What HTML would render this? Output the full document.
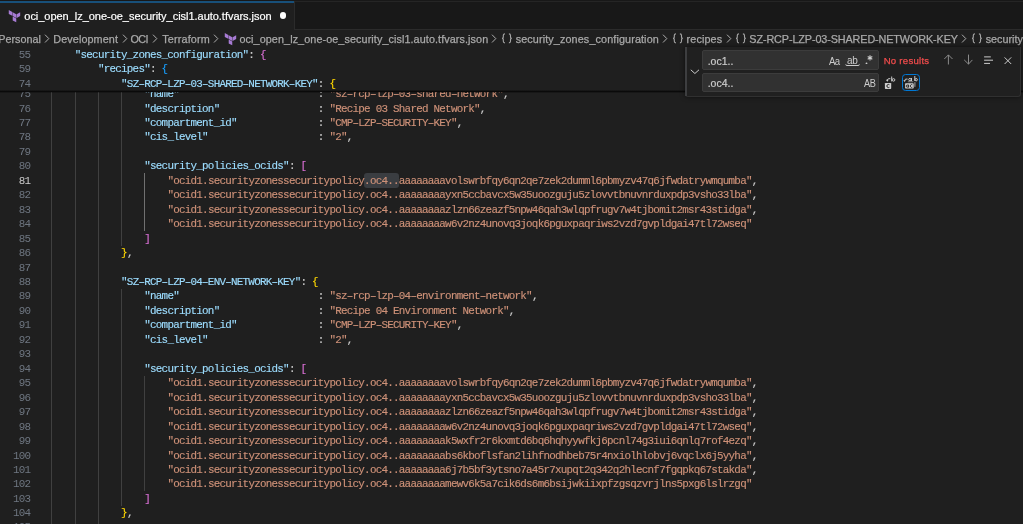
<!DOCTYPE html>
<html><head><meta charset="utf-8">
<style>
html,body{margin:0;padding:0;}
body{width:1023px;height:524px;overflow:hidden;background:#1f1f1f;position:relative;font-family:"Liberation Sans",sans-serif;}
.abs{position:absolute;}
#tabbar{position:absolute;left:0;top:0;width:1023px;height:30px;background:#181818;}
#tabbar .bb{position:absolute;left:294px;top:29px;width:729px;height:1px;background:#2b2b2b;}
#tab{position:absolute;left:0;top:1px;width:294px;height:29px;background:#1f1f1f;border-right:1px solid #2b2b2b;}
#tab .top{position:absolute;left:0;top:0;width:294px;height:2px;background:#18507a;}
#tab .t{position:absolute;left:24.3px;top:8px;font-size:11px;letter-spacing:-0.03px;color:#ffffff;-webkit-text-stroke:0.2px #ffffff;white-space:nowrap;line-height:14px;}
#tab .dot{position:absolute;left:279.6px;top:11.3px;width:6.8px;height:6.8px;border-radius:50%;background:#ffffff;}
#bc{position:absolute;left:0;top:0;}
.bct{position:absolute;top:31px;font-size:10.8px;color:#a9a9a9;white-space:nowrap;line-height:14px;-webkit-text-stroke:0.25px #a9a9a9;}
.code{font-family:"Liberation Mono",monospace;font-size:9.65px;}
.g{position:absolute;width:1px;height:14.46px;}
.hl{position:absolute;height:14.46px;background:#3a3d41;border-radius:3px;}
.ln{position:absolute;left:0;width:30.3px;text-align:right;font-family:"Liberation Mono",monospace;font-size:10.9px;letter-spacing:-0.75px;line-height:14.46px;color:#6e7681;white-space:pre;}
.ln.act{color:#cccccc;}
.cl{position:absolute;font-family:"Liberation Mono",monospace;font-size:10.9px;letter-spacing:-0.75px;line-height:14.46px;white-space:pre;color:#cccccc;-webkit-text-stroke:0.15px currentColor;}
#sticky{position:absolute;left:0;top:46px;width:1023px;height:46px;background:#1f1f1f;}
#stickyshadow{position:absolute;left:0;top:89.5px;width:1023px;height:3.5px;background:linear-gradient(rgba(0,0,0,0) 0%,rgba(0,0,0,0.75) 45%,rgba(0,0,0,0) 100%);}
#find{position:absolute;left:685px;top:47px;width:335.6px;height:49.8px;box-sizing:border-box;will-change:transform;background:#202020;border:1px solid #303030;border-top:none;border-left:none;box-shadow:0 0 5px rgba(0,0,0,0.55);border-bottom-left-radius:3px;border-bottom-right-radius:3px;}
#find .sash{position:absolute;left:0;top:0;width:2.2px;height:100%;background:#3d3e40;}
.inp{position:absolute;left:17px;width:177px;height:19.7px;background:#313131;border:1px solid #3c3c3c;border-radius:2px;box-sizing:border-box;}
.inp .v{position:absolute;left:4.7px;top:3.5px;font-size:10.5px;color:#cccccc;line-height:12px;-webkit-text-stroke:0.2px #cccccc;}
.ft{position:absolute;color:#cccccc;white-space:nowrap;line-height:12px;}
</style></head><body>
<div id="root" style="position:absolute;left:0;top:0;width:1023px;height:524px;overflow:hidden;will-change:transform">
<div id="tabbar">
  <div class="bb"></div>
  <div class="abs" style="left:0;top:1px;width:1023px;height:1px;background:#252525"></div>
  <div id="tab">
    <div class="top"></div>
    <svg class="abs" style="left:7.6px;top:9.3px" width="13" height="13" viewBox="0 0 13 13"><path transform="scale(0.54 0.515)" d="M1.44 0v7.575l6.561 3.79V3.787zm21.12 4.227l-6.561 3.791v7.574l6.56-3.787zM8.72 4.23v7.575l6.561 3.787V8.018zm0 8.405v7.575L15.28 24v-7.578z" fill="#a77bd4"/></svg>
    <div class="t">oci_open_lz_one-oe_security_cisl1.auto.tfvars.json</div>
    <div class="dot"></div>
  </div>
</div>
<div id="bc">
<div class="bct" style="left:-1.7px;top:32.0px;letter-spacing:0.000px">Personal</div>
<svg class="abs" style="left:44.0px;top:34px" width="6" height="10" viewBox="0 0 6 10"><path d="M1 0.7 L4.8 4.6 L1 8.5" fill="none" stroke="#b4b4b4" stroke-width="0.95"/></svg>
<div class="bct" style="left:53.3px;top:32.0px;letter-spacing:0.100px">Development</div>
<svg class="abs" style="left:121.6px;top:34px" width="6" height="10" viewBox="0 0 6 10"><path d="M1 0.7 L4.8 4.6 L1 8.5" fill="none" stroke="#b4b4b4" stroke-width="0.95"/></svg>
<div class="bct" style="left:130.4px;top:32.0px;letter-spacing:-0.600px">OCI</div>
<svg class="abs" style="left:152.4px;top:34px" width="6" height="10" viewBox="0 0 6 10"><path d="M1 0.7 L4.8 4.6 L1 8.5" fill="none" stroke="#b4b4b4" stroke-width="0.95"/></svg>
<div class="bct" style="left:162.3px;top:32.0px;letter-spacing:0.150px">Terraform</div>
<svg class="abs" style="left:213.3px;top:34px" width="6" height="10" viewBox="0 0 6 10"><path d="M1 0.7 L4.8 4.6 L1 8.5" fill="none" stroke="#b4b4b4" stroke-width="0.95"/></svg>
<svg class="abs tfi" style="left:224.0px;top:32.5px" width="13" height="13" viewBox="0 0 13 13"><path transform="scale(0.54 0.515)" d="M1.44 0v7.575l6.561 3.79V3.787zm21.12 4.227l-6.561 3.791v7.574l6.56-3.787zM8.72 4.23v7.575l6.561 3.787V8.018zm0 8.405v7.575L15.28 24v-7.578z" fill="#a77bd4"/></svg>
<div class="bct" style="left:239.5px;top:32.0px;letter-spacing:0.090px">oci_open_lz_one-oe_security_cisl1.auto.tfvars.json</div>
<svg class="abs" style="left:491.2px;top:34px" width="6" height="10" viewBox="0 0 6 10"><path d="M1 0.7 L4.8 4.6 L1 8.5" fill="none" stroke="#b4b4b4" stroke-width="0.95"/></svg>
<svg class="abs" style="left:501.0px;top:33.3px" width="12" height="11" viewBox="0 0 12 11"><path d="M3.9 0.9C2.8 0.9 2.3 1.5 2.3 2.5L2.3 4.3C2.3 5 1.9 5.3 1.1 5.4C1.9 5.5 2.3 5.8 2.3 6.5L2.3 8.3C2.3 9.3 2.8 9.9 3.9 9.9M7.9 0.9C9 0.9 9.5 1.5 9.5 2.5L9.5 4.3C9.5 5 9.9 5.3 10.7 5.4C9.9 5.5 9.5 5.8 9.5 6.5L9.5 8.3C9.5 9.3 9 9.9 7.9 9.9" fill="none" stroke="#a6a6a6" stroke-width="1.1"/></svg>
<div class="bct" style="left:515.7px;top:32.0px;letter-spacing:0.120px">security_zones_configuration</div>
<svg class="abs" style="left:662.4px;top:34px" width="6" height="10" viewBox="0 0 6 10"><path d="M1 0.7 L4.8 4.6 L1 8.5" fill="none" stroke="#b4b4b4" stroke-width="0.95"/></svg>
<svg class="abs" style="left:672.0px;top:33.3px" width="12" height="11" viewBox="0 0 12 11"><path d="M3.9 0.9C2.8 0.9 2.3 1.5 2.3 2.5L2.3 4.3C2.3 5 1.9 5.3 1.1 5.4C1.9 5.5 2.3 5.8 2.3 6.5L2.3 8.3C2.3 9.3 2.8 9.9 3.9 9.9M7.9 0.9C9 0.9 9.5 1.5 9.5 2.5L9.5 4.3C9.5 5 9.9 5.3 10.7 5.4C9.9 5.5 9.5 5.8 9.5 6.5L9.5 8.3C9.5 9.3 9 9.9 7.9 9.9" fill="none" stroke="#a6a6a6" stroke-width="1.1"/></svg>
<div class="bct" style="left:686.6px;top:32.0px;letter-spacing:0.120px">recipes</div>
<svg class="abs" style="left:725.7px;top:34px" width="6" height="10" viewBox="0 0 6 10"><path d="M1 0.7 L4.8 4.6 L1 8.5" fill="none" stroke="#b4b4b4" stroke-width="0.95"/></svg>
<svg class="abs" style="left:735.4px;top:33.3px" width="12" height="11" viewBox="0 0 12 11"><path d="M3.9 0.9C2.8 0.9 2.3 1.5 2.3 2.5L2.3 4.3C2.3 5 1.9 5.3 1.1 5.4C1.9 5.5 2.3 5.8 2.3 6.5L2.3 8.3C2.3 9.3 2.8 9.9 3.9 9.9M7.9 0.9C9 0.9 9.5 1.5 9.5 2.5L9.5 4.3C9.5 5 9.9 5.3 10.7 5.4C9.9 5.5 9.5 5.8 9.5 6.5L9.5 8.3C9.5 9.3 9 9.9 7.9 9.9" fill="none" stroke="#a6a6a6" stroke-width="1.1"/></svg>
<div class="bct" style="left:749.3px;top:32.0px;letter-spacing:-0.100px">SZ-RCP-LZP-03-SHARED-NETWORK-KEY</div>
<svg class="abs" style="left:960.6px;top:34px" width="6" height="10" viewBox="0 0 6 10"><path d="M1 0.7 L4.8 4.6 L1 8.5" fill="none" stroke="#b4b4b4" stroke-width="0.95"/></svg>
<svg class="abs" style="left:971.2px;top:33.3px" width="12" height="11" viewBox="0 0 12 11"><path d="M3.9 0.9C2.8 0.9 2.3 1.5 2.3 2.5L2.3 4.3C2.3 5 1.9 5.3 1.1 5.4C1.9 5.5 2.3 5.8 2.3 6.5L2.3 8.3C2.3 9.3 2.8 9.9 3.9 9.9M7.9 0.9C9 0.9 9.5 1.5 9.5 2.5L9.5 4.3C9.5 5 9.9 5.3 10.7 5.4C9.9 5.5 9.5 5.8 9.5 6.5L9.5 8.3C9.5 9.3 9 9.9 7.9 9.9" fill="none" stroke="#a6a6a6" stroke-width="1.1"/></svg>
<div class="bct" style="left:985.7px;top:32.0px;letter-spacing:0.000px">security</div>
</div>
<div class="g" style="left:51px;top:86.54px;height:448.26px;background:#404040"></div>
<div class="g" style="left:75px;top:86.54px;height:448.26px;background:#404040"></div>
<div class="g" style="left:98px;top:86.54px;height:448.26px;background:#404040"></div>
<div class="g" style="left:121px;top:86.54px;height:159.06px;background:#404040"></div>
<div class="g" style="left:121px;top:288.98px;height:216.90px;background:#404040"></div>
<div class="g" style="left:144px;top:173.30px;height:57.84px;background:#707070"></div>
<div class="g" style="left:144px;top:375.74px;height:115.68px;background:#404040"></div>
<div class="hl" style="left:364.26px;top:173.30px;width:34.74px"></div>
<div class="ln" style="top:87.04px">75</div>
<div class="cl" style="top:87.04px;left:144.24px"><span style="color:#9cdcfe">&quot;name&quot;</span>                        <span style="color:#cccccc">: </span><span style="color:#ce9178">&quot;sz&#8211;rcp&#8211;lzp&#8211;03&#8211;shared&#8211;network&quot;</span><span style="color:#cccccc">,</span></div>
<div class="ln" style="top:101.50px">76</div>
<div class="cl" style="top:101.50px;left:144.24px"><span style="color:#9cdcfe">&quot;description&quot;</span>                 <span style="color:#cccccc">: </span><span style="color:#ce9178">&quot;Recipe 03 Shared Network&quot;</span><span style="color:#cccccc">,</span></div>
<div class="ln" style="top:115.96px">77</div>
<div class="cl" style="top:115.96px;left:144.24px"><span style="color:#9cdcfe">&quot;compartment_id&quot;</span>              <span style="color:#cccccc">: </span><span style="color:#ce9178">&quot;CMP&#8211;LZP&#8211;SECURITY&#8211;KEY&quot;</span><span style="color:#cccccc">,</span></div>
<div class="ln" style="top:130.42px">78</div>
<div class="cl" style="top:130.42px;left:144.24px"><span style="color:#9cdcfe">&quot;cis_level&quot;</span>                   <span style="color:#cccccc">: </span><span style="color:#ce9178">&quot;2&quot;</span><span style="color:#cccccc">,</span></div>
<div class="ln" style="top:144.88px">79</div>
<div class="ln" style="top:159.34px">80</div>
<div class="cl" style="top:159.34px;left:144.24px"><span style="color:#9cdcfe">&quot;security_policies_ocids&quot;</span><span style="color:#cccccc">: </span><span style="color:#da70d6">[</span></div>
<div class="ln act" style="top:173.80px">81</div>
<div class="cl" style="top:173.80px;left:167.40px"><span style="color:#ce9178">&quot;ocid1.securityzonessecuritypolicy.oc4..aaaaaaaavolswrbfqy6qn2qe7zek2dumml6pbmyzv47q6jfwdatrywmqumba&quot;</span><span style="color:#cccccc">,</span></div>
<div class="ln" style="top:188.26px">82</div>
<div class="cl" style="top:188.26px;left:167.40px"><span style="color:#ce9178">&quot;ocid1.securityzonessecuritypolicy.oc4..aaaaaaaayxn5ccbavcx5w35uoozguju5zlovvtbnuvnrduxpdp3vsho33lba&quot;</span><span style="color:#cccccc">,</span></div>
<div class="ln" style="top:202.72px">83</div>
<div class="cl" style="top:202.72px;left:167.40px"><span style="color:#ce9178">&quot;ocid1.securityzonessecuritypolicy.oc4..aaaaaaaazlzn66zeazf5npw46qah3wlqpfrugv7w4tjbomit2msr43stidga&quot;</span><span style="color:#cccccc">,</span></div>
<div class="ln" style="top:217.18px">84</div>
<div class="cl" style="top:217.18px;left:167.40px"><span style="color:#ce9178">&quot;ocid1.securityzonessecuritypolicy.oc4..aaaaaaaaw6v2nz4unovq3joqk6pguxpaqriws2vzd7gvpldgai47tl72wseq&quot;</span></div>
<div class="ln" style="top:231.64px">85</div>
<div class="cl" style="top:231.64px;left:144.24px"><span style="color:#da70d6">]</span></div>
<div class="ln" style="top:246.10px">86</div>
<div class="cl" style="top:246.10px;left:121.08px"><span style="color:#ffd700">}</span><span style="color:#cccccc">,</span></div>
<div class="ln" style="top:260.56px">87</div>
<div class="ln" style="top:275.02px">88</div>
<div class="cl" style="top:275.02px;left:121.08px"><span style="color:#9cdcfe">&quot;SZ&#8211;RCP&#8211;LZP&#8211;04&#8211;ENV&#8211;NETWORK&#8211;KEY&quot;</span><span style="color:#cccccc">: </span><span style="color:#ffd700">{</span></div>
<div class="ln" style="top:289.48px">89</div>
<div class="cl" style="top:289.48px;left:144.24px"><span style="color:#9cdcfe">&quot;name&quot;</span>                        <span style="color:#cccccc">: </span><span style="color:#ce9178">&quot;sz&#8211;rcp&#8211;lzp&#8211;04&#8211;environment&#8211;network&quot;</span><span style="color:#cccccc">,</span></div>
<div class="ln" style="top:303.94px">90</div>
<div class="cl" style="top:303.94px;left:144.24px"><span style="color:#9cdcfe">&quot;description&quot;</span>                 <span style="color:#cccccc">: </span><span style="color:#ce9178">&quot;Recipe 04 Environment Network&quot;</span><span style="color:#cccccc">,</span></div>
<div class="ln" style="top:318.40px">91</div>
<div class="cl" style="top:318.40px;left:144.24px"><span style="color:#9cdcfe">&quot;compartment_id&quot;</span>              <span style="color:#cccccc">: </span><span style="color:#ce9178">&quot;CMP&#8211;LZP&#8211;SECURITY&#8211;KEY&quot;</span><span style="color:#cccccc">,</span></div>
<div class="ln" style="top:332.86px">92</div>
<div class="cl" style="top:332.86px;left:144.24px"><span style="color:#9cdcfe">&quot;cis_level&quot;</span>                   <span style="color:#cccccc">: </span><span style="color:#ce9178">&quot;2&quot;</span><span style="color:#cccccc">,</span></div>
<div class="ln" style="top:347.32px">93</div>
<div class="ln" style="top:361.78px">94</div>
<div class="cl" style="top:361.78px;left:144.24px"><span style="color:#9cdcfe">&quot;security_policies_ocids&quot;</span><span style="color:#cccccc">: </span><span style="color:#da70d6">[</span></div>
<div class="ln" style="top:376.24px">95</div>
<div class="cl" style="top:376.24px;left:167.40px"><span style="color:#ce9178">&quot;ocid1.securityzonessecuritypolicy.oc4..aaaaaaaavolswrbfqy6qn2qe7zek2dumml6pbmyzv47q6jfwdatrywmqumba&quot;</span><span style="color:#cccccc">,</span></div>
<div class="ln" style="top:390.70px">96</div>
<div class="cl" style="top:390.70px;left:167.40px"><span style="color:#ce9178">&quot;ocid1.securityzonessecuritypolicy.oc4..aaaaaaaayxn5ccbavcx5w35uoozguju5zlovvtbnuvnrduxpdp3vsho33lba&quot;</span><span style="color:#cccccc">,</span></div>
<div class="ln" style="top:405.16px">97</div>
<div class="cl" style="top:405.16px;left:167.40px"><span style="color:#ce9178">&quot;ocid1.securityzonessecuritypolicy.oc4..aaaaaaaazlzn66zeazf5npw46qah3wlqpfrugv7w4tjbomit2msr43stidga&quot;</span><span style="color:#cccccc">,</span></div>
<div class="ln" style="top:419.62px">98</div>
<div class="cl" style="top:419.62px;left:167.40px"><span style="color:#ce9178">&quot;ocid1.securityzonessecuritypolicy.oc4..aaaaaaaaw6v2nz4unovq3joqk6pguxpaqriws2vzd7gvpldgai47tl72wseq&quot;</span><span style="color:#cccccc">,</span></div>
<div class="ln" style="top:434.08px">99</div>
<div class="cl" style="top:434.08px;left:167.40px"><span style="color:#ce9178">&quot;ocid1.securityzonessecuritypolicy.oc4..aaaaaaaak5wxfr2r6kxmtd6bq6hqhyywfkj6pcnl74g3iui6qnlq7rof4ezq&quot;</span><span style="color:#cccccc">,</span></div>
<div class="ln" style="top:448.54px">100</div>
<div class="cl" style="top:448.54px;left:167.40px"><span style="color:#ce9178">&quot;ocid1.securityzonessecuritypolicy.oc4..aaaaaaaabs6kboflsfan2lihfnodhbeb75r4nxiolhlobvj6vqclx6j5yyha&quot;</span><span style="color:#cccccc">,</span></div>
<div class="ln" style="top:463.00px">101</div>
<div class="cl" style="top:463.00px;left:167.40px"><span style="color:#ce9178">&quot;ocid1.securityzonessecuritypolicy.oc4..aaaaaaaa6j7b5bf3ytsno7a45r7xupqt2q342q2hlecnf7fgqpkq67stakda&quot;</span><span style="color:#cccccc">,</span></div>
<div class="ln" style="top:477.46px">102</div>
<div class="cl" style="top:477.46px;left:167.40px"><span style="color:#ce9178">&quot;ocid1.securityzonessecuritypolicy.oc4..aaaaaaaamewv6k5a7cik6ds6m6bsijwkiixpfzgsqzvrjlns5pxg6lslrzgq&quot;</span></div>
<div class="ln" style="top:491.92px">103</div>
<div class="cl" style="top:491.92px;left:144.24px"><span style="color:#da70d6">]</span></div>
<div class="ln" style="top:506.38px">104</div>
<div class="cl" style="top:506.38px;left:121.08px"><span style="color:#ffd700">}</span><span style="color:#cccccc">,</span></div>
<div class="ln" style="top:520.04px">105</div>
<div id="sticky">
</div>
<div class="ln" style="top:47.60px">55</div>
<div class="cl" style="top:47.60px;left:74.76px"><span style="color:#9cdcfe">&quot;security_zones_configuration&quot;</span><span style="color:#cccccc">: </span><span style="color:#da70d6">{</span></div>
<div class="ln" style="top:62.06px">59</div>
<div class="cl" style="top:62.06px;left:97.92px"><span style="color:#9cdcfe">&quot;recipes&quot;</span><span style="color:#cccccc">: </span><span style="color:#179fff">{</span></div>
<div class="ln" style="top:76.52px">74</div>
<div class="cl" style="top:76.52px;left:121.08px"><span style="color:#9cdcfe">&quot;SZ&#8211;RCP&#8211;LZP&#8211;03&#8211;SHARED&#8211;NETWORK&#8211;KEY&quot;</span><span style="color:#cccccc">: </span><span style="color:#ffd700">{</span></div>
<div id="stickyshadow"></div>
<div id="find">
  <div class="sash"></div>
  <svg class="abs" style="left:5px;top:22.0px" width="10" height="6" viewBox="0 0 10 6"><path d="M0.8 0.8L4.9 4.5L9 0.8" fill="none" stroke="#cccccc" stroke-width="1"/></svg>
  <div class="inp" style="top:3.4px"><div class="v">.oc1..</div></div>
  <div class="inp" style="top:25.6px"><div class="v">.oc4..</div></div>
  <div class="ft" style="left:143.8px;top:7.6px;font-size:10.9px;letter-spacing:-0.6px;transform:scaleX(0.88);transform-origin:0 0">Aa</div>
  <div class="ft" style="left:161.6px;top:7.3px;font-size:10.9px;letter-spacing:-0.3px;transform:scaleX(0.92);transform-origin:0 0">ab</div>
  <svg class="abs" style="left:160px;top:16.8px" width="15" height="3" viewBox="0 0 15 3"><path d="M0.8 0.3L1.3 1.5L13.8 1.5L14.3 0.3" fill="none" stroke="#cccccc" stroke-width="1"/></svg>
  <svg class="abs" style="left:179px;top:6.9px" width="10" height="10" viewBox="0 0 10 10"><circle cx="2.5" cy="9.4" r="0.9" fill="#cccccc"/><g stroke="#cccccc" stroke-width="1.1"><path d="M6 1.3L6 6.5M3.7 2.6L8.3 5.2M3.7 5.2L8.3 2.6"/></g></svg>
  <div class="ft" style="left:178.5px;top:29.5px;font-size:10.8px;letter-spacing:-0.4px;transform:scaleX(0.85);transform-origin:0 0">AB</div>
  <div class="ft" style="left:198.7px;top:8.0px;font-size:9.6px;letter-spacing:0.25px;color:#f14c4c;-webkit-text-stroke:0.25px #f14c4c">No results</div>
  <svg class="abs" style="left:258px;top:6.8px" width="10" height="11" viewBox="0 0 10 11"><path d="M5.4 0.9L5.4 10.5M1.3 5L5.4 0.9L9.5 5" fill="none" stroke="#8a8a8a" stroke-width="1"/></svg>
  <svg class="abs" style="left:278px;top:6.8px" width="10" height="11" viewBox="0 0 10 11"><path d="M5.5 0.6L5.5 10.2M1.2 5.9L5.5 10.1L9.4 5.9" fill="none" stroke="#8a8a8a" stroke-width="1"/></svg>
  <svg class="abs" style="left:298px;top:8.0px" width="10" height="9" viewBox="0 0 10 9"><path d="M1.1 1.9L7.8 1.9M1.1 5.2L10 5.2M1.1 8.4L7 8.4" fill="none" stroke="#cccccc" stroke-width="1"/></svg>
  <svg class="abs" style="left:318px;top:8.5px" width="9" height="9" viewBox="0 0 9 9"><path d="M1.6 1.4L8.2 8M8.2 1.4L1.6 8" fill="none" stroke="#cccccc" stroke-width="1"/></svg>
  <div class="abs" style="left:217.3px;top:27.0px;width:17.3px;height:17.3px;box-sizing:border-box;border:1.3px solid #0078d4;border-radius:3.5px;"></div>
  <svg class="abs" style="left:195px;top:25.0px" width="42" height="22" viewBox="880 72 42 22">
    <g fill="none" stroke="#cccccc" stroke-width="1">
      <path d="M891.7 76.5L891.7 81.4"/><ellipse cx="893.5" cy="79.9" rx="1.35" ry="1.25"/>
      <path d="M890.4 78.7L888.7 78.7Q887.6 78.9 887.3 80.2"/>
    </g>
    <path d="M885.9 79.8L887.3 81.7L888.7 79.8Z" fill="#cccccc"/>
    <rect x="884.9" y="82.9" width="6.3" height="6.1" rx="0.7" fill="#cecece"/>
    <path d="M889.4 84.7C888.6 84.1 886.9 84.3 886.9 86C886.9 87.7 888.6 87.9 889.4 87.3" fill="none" stroke="#202020" stroke-width="1"/>
    <g fill="none" stroke="#cccccc" stroke-width="1">
      <path d="M907.6 79.1L905.9 79.1Q904.9 79.3 904.6 80.6"/>
      <ellipse cx="909.9" cy="79.6" rx="1.2" ry="1.2"/><path d="M911.5 78L911.5 81"/>
      <path d="M914.8 76L914.8 81"/><ellipse cx="916.2" cy="79.7" rx="1.15" ry="1.2"/>
    </g>
    <path d="M903.3 80.2L904.6 82L905.9 80.2Z" fill="#cccccc"/>
    <rect x="907.8" y="81.4" width="5.5" height="0.8" fill="#9a9a9a"/>
    <rect x="905.1" y="83.3" width="8.6" height="5.2" rx="0.7" fill="#cecece"/>
    <g fill="none" stroke="#202020" stroke-width="0.9">
      <ellipse cx="907.3" cy="86.1" rx="1.05" ry="1.15"/><path d="M908.6 84.6L908.6 87.6"/>
      <path d="M912.4 84.8C911.8 84.3 910.3 84.5 910.3 86C910.3 87.5 911.8 87.7 912.4 87.2"/>
    </g>
    <rect x="914.4" y="82.2" width="1" height="4.6" fill="#a0a0a0"/>
  </svg>
</div>
</div>
</body></html>
